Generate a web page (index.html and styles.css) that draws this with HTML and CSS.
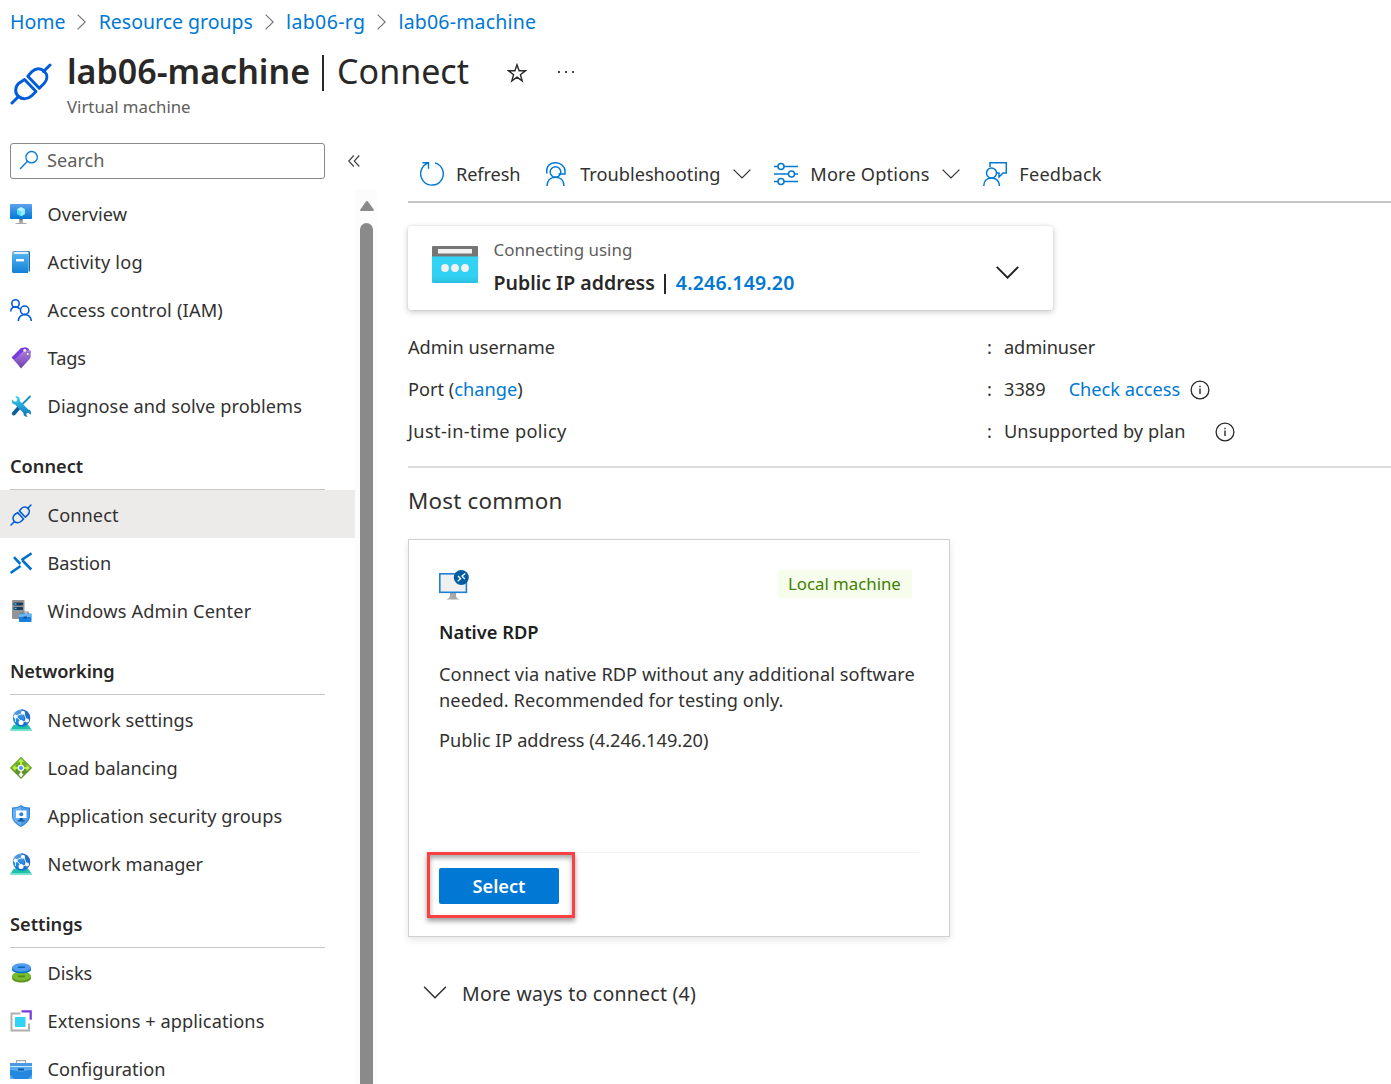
FILE: index.html
```html
<!DOCTYPE html>
<html lang="en">
<head>
<meta charset="utf-8">
<title>lab06-machine | Connect</title>
<link rel="stylesheet" href="styles.css">
</head>
<body>
<svg class="defs" aria-hidden="true">
  <defs>
    <linearGradient id="blue" x1="0" y1="0" x2="0" y2="1"><stop offset="0" stop-color="#5ea0ef"/><stop offset="1" stop-color="#0078d4"/></linearGradient>
    <linearGradient id="sky" x1="0" y1="0" x2="0" y2="1"><stop offset="0" stop-color="#54b5ef"/><stop offset="1" stop-color="#1380d8"/></linearGradient>
    <linearGradient id="purple" x1="0" y1="0" x2="0" y2="1"><stop offset="0" stop-color="#b27fe0"/><stop offset="1" stop-color="#6a3fb0"/></linearGradient>
    <linearGradient id="grey" x1="0" y1="0" x2="0" y2="1"><stop offset="0" stop-color="#707070"/><stop offset="1" stop-color="#c4c4c4"/></linearGradient>
    <linearGradient id="tool" x1="0" y1="0" x2="0" y2="1"><stop offset="0" stop-color="#32d4f5"/><stop offset="1" stop-color="#1270b8"/></linearGradient>
    <linearGradient id="cyan" x1="0" y1="0" x2="0" y2="1"><stop offset="0" stop-color="#32d4f5"/><stop offset=".75" stop-color="#32d0f2"/><stop offset="1" stop-color="#2abfe0"/></linearGradient>
    <symbol id="plug" viewBox="0 0 42 42">
      <g fill="none" stroke="#015cda" stroke-width="3" stroke-linecap="round" stroke-linejoin="round">
        <path d="M2 40l6.500-6.500M33.500 8.500L40 2"/>
        <path d="M14.500 16.500l11.500 12-4 4c-4 4-10 4-13.500 1s-4-9 0-13z"/>
        <path d="M17.800 13.200l11.500 12 4.500-4.500c4-4 4-9 .5-12.500s-8.500-3.500-12.500.5z"/>
      </g>
    </symbol>
    <symbol id="vm" viewBox="0 0 22 22">
      <path d="M7.500 20.500c2-.6 1.800-2 1.800-4.500h3.400c0 2.500-.2 3.900 1.800 4.500z" fill="url(#grey)"/><path d="M5.500 20h11v1h-11z" fill="#a9a9a9"/>
      <rect y="1" width="22" height="15" rx=".8" fill="url(#blue)"/>
      <path d="M11 4l4 2.300v4.600l-4 2.300-4-2.300V6.300z" fill="#50e0ff"/><path d="M11 4l4 2.300-4 2.300-4-2.300z" fill="#b5f3ff"/><path d="M11 8.600l4-2.300v4.600l-4 2.300z" fill="#9cebff"/>
    </symbol>
    <symbol id="book" viewBox="0 0 22 22">
      <path d="M4 0h14.500a1.500 1.500 0 0 1 1.500 1.500v19h-16z" fill="#1269ae"/><path d="M4 1h14.500v20H4z" fill="#e6f1fa"/>
      <path d="M2 2a2 2 0 0 0 1.500 1H18v19H3.500A1.500 1.500 0 0 1 2 20.500z" fill="url(#sky)"/><path d="M2 2a2 2 0 0 1 2-2h14v1H4.500a1 1 0 0 0 0 2H3z" fill="#5aa0d8"/>
      <rect x="6" y="8" width="8" height="2.400" fill="#fff"/>
    </symbol>
    <symbol id="people" viewBox="0 0 22 22">
      <g fill="none" stroke="#015cda" stroke-width="1.600"><circle cx="5.500" cy="4.500" r="3.700"/><circle cx="14.700" cy="11.200" r="4.200"/><path d="M.8 12.500c0-5 6-6 9-2.500M8.300 22c.5-8.500 12.400-8.500 13 0"/></g>
    </symbol>
    <symbol id="tag" viewBox="0 0 22 22">
      <path d="M1.500 10.500L11 1l5-.8 3 1.800-2 9-9 6z" fill="#773adc"/>
      <path d="M4 13L13.500 4l6-.8a1.300 1.300 0 0 1 1.400 1.300l-.4 6.500-9.500 10.500z" fill="url(#purple)"/>
      <circle cx="14.800" cy="3.200" r="1.500" fill="#eee"/><circle cx="17.700" cy="7" r="1.600" fill="#fff" stroke="#6a3fb0" stroke-width=".7"/>
    </symbol>
    <symbol id="tools" viewBox="0 0 22 22">
      <path d="M20.500 1L9.500 12" stroke="#188fc0" stroke-width="1.800"/><path d="M9.500 12L3.800 18.500" stroke="#125f98" stroke-width="4" stroke-linecap="round"/>
      <path d="M2 4.500l2.500 2.300 2.300-.6.500-2.300L5.200 1.500C8 .7 10.300 3 9.800 6l8.500 8.600c2.300.2 3.500 3 2.200 5.200l-2-2-1.800.5-.5 1.800 1.500 1.500c-2.500.6-4.500-1.300-4.300-3.700L5 9.500C2.500 9.500 1.200 7 2 4.500z" fill="url(#tool)"/>
    </symbol>
    <symbol id="bastion" viewBox="0 0 22 22">
      <g fill="none" stroke="#0072c9" stroke-width="2.600"><path d="M4 5.200l6.300 6.800M.6 20.800l10-6.800"/><path d="M21.600 1.300l-10.200 6.900M12.500 8.500l8.800 9"/></g>
    </symbol>
    <symbol id="server" viewBox="0 0 22 22">
      <rect x="2" width="12.500" height="19" rx="1" fill="#949494"/><rect x="3.500" y="2.500" width="9.500" height="3" rx="1" fill="#173a5b"/><rect x="3.500" y="7" width="9.500" height="3" rx="1" fill="#173a5b"/>
      <path d="M4.500 4h2m-2 4.500h2" stroke="#43c7f4" stroke-width="1.500"/>
      <path d="M12.500 14v-2h5.500v2" fill="none" stroke="#888" stroke-width="1.200"/><rect x="9" y="13.500" width="12.500" height="8.500" rx=".8" fill="#1a7fd8"/><path d="M9 14h12.500v3H9z" fill="#66b4f4"/><path d="M13.500 16.500h3.500v2h-3.500z" fill="#0b559d"/>
    </symbol>
    <symbol id="globe" viewBox="0 0 22 22">
      <path d="M3.500 16h15l3.500 5.500H0z" fill="#1fc4a6"/><path d="M1 20h20l1 1.500H0z" fill="#6fe1cc"/>
      <circle cx="11.500" cy="9" r="8.700" fill="url(#blue)"/><path d="M11.500.3a8.700 8.700 0 0 1 0 17.400 12 12 0 0 0 3-9z" fill="#2470c8"/>
      <g stroke="#d9efff" stroke-width="1"><path d="M5.500 7L14 4M5.500 7l6.500 6M14 4l2.500 7.500-4.500 2M5.500 7v6" fill="none"/></g>
      <g fill="#fff"><circle cx="13" cy="3.800" r="2"/><circle cx="5.500" cy="7.500" r="2"/><circle cx="11" cy="13.500" r="2.500"/><circle cx="17" cy="11.500" r="2"/></g>
    </symbol>
    <symbol id="balance" viewBox="0 0 22 22">
      <path d="M11 0l11 11-11 11L0 11z" fill="#5e9624"/><path d="M11 0l11 11H0z" fill="#72ad2c"/>
      <g fill="#b6ef48"><path d="M11 1.500L7.800 5H10v4h2V5h2.200zM2 11l3.500-3.200V10H9v2H5.500v2.200zM20 11l-3.500-3.200V10H13v2h3.500v2.200z"/></g>
      <path d="M11 14v3" stroke="#fff" stroke-width="1.200"/><circle cx="11" cy="11" r="3.200" fill="#fff"/><circle cx="11" cy="11" r="2" fill="#4b94e8"/><path d="M8.500 17.200h5L11 20.500z" fill="#fff"/><circle cx="11" cy="17.200" r="1.700" fill="#fff"/>
    </symbol>
    <symbol id="shield" viewBox="0 0 22 22">
      <path d="M11 0c2.500 2 5.500 2.300 9 2.500V11c0 5-4.500 8.500-9 11C6.500 19.500 2 16 2 11V2.500C5.500 2.300 8.500 2 11 0z" fill="#2e83dc"/><path d="M11 1.300c2.500 1.800 5 2.200 8 2.400V11c0 4.500-4 7.500-8 9.700z" fill="#4f9ceb"/><path d="M11 1.300C8.500 3.100 6 3.500 3 3.700V11c0 4.500 4 7.500 8 9.700z" fill="#68b2f5"/>
      <rect x="6" y="5.500" width="10.500" height="7.500" fill="#fff"/><path d="M10 13h2.300l.7 2.500H9.200z" fill="#134f90"/><path d="M7.500 15.300h7.200v1.200H7.500z" fill="#144f90"/><circle cx="11.300" cy="9.200" r="2" fill="#2e83dc"/>
    </symbol>
    <symbol id="disks" viewBox="0 0 22 22">
      <path d="M2 14v2c0 6 19 6 19 0v-2z" fill="#5e9624"/><ellipse cx="11.500" cy="14" rx="9.500" ry="4.500" fill="#76bc2d"/><path d="M8 13.500h7v1.700H8z" fill="#55861f"/>
      <path d="M2 5.500v2c0 5 19 5 19 0v-2z" fill="#0072cc"/><ellipse cx="11.500" cy="5.500" rx="9.500" ry="4.300" fill="#519ceb"/><path d="M8 4.500h7v1.500H8z" fill="#0769bd"/>
    </symbol>
    <symbol id="ext" viewBox="0 0 22 22">
      <path d="M10.500 3.500H1.500v17h17.500v-7" fill="none" stroke="#b0b0b0" stroke-width="2"/><path d="M11.500 1.300h9.200v8.500" fill="none" stroke="#773adc" stroke-width="2.200"/><rect x="5" y="7" width="10.500" height="10" fill="#32d4f5"/>
    </symbol>
    <symbol id="case" viewBox="0 0 22 22">
      <path d="M6.500 6V2.600h9V6" fill="none" stroke="#aaa" stroke-width="1.200"/><rect y="5" width="22" height="16" rx=".8" fill="#2288e0"/><path d="M0 5.800a.8.800 0 0 1 .8-.8h20.400a.8.800 0 0 1 .8.800V8H0z" fill="#4b99e6"/><path d="M0 8h22v1.300H0z" fill="#b9efff"/><path d="M0 9.300h22V12c-5 0-7 1.500-11 1.500S5 12 0 12z" fill="#5ca8ee"/><path d="M8 10.500h6v2H8z" fill="#0b5ba8"/><path d="M0 21v-4l4 4zM22 21v-4l-4 4z" fill="#63aef2"/>
    </symbol>
    <symbol id="info" viewBox="0 0 20 20"><circle cx="10" cy="10" r="8.900" fill="none" stroke="#292827" stroke-width="1.300"/><path d="M10 8.500v5.500M10 5.700v1.500" stroke="#292827" stroke-width="1.400"/></symbol>
    <symbol id="sep" viewBox="0 0 9 16"><path d="M.6.600L8.200 8 .6 15.400" fill="none" stroke="#777" stroke-width="1.200"/></symbol>
    <symbol id="down" viewBox="0 0 18 10"><path d="M.6.600L9 9 17.400.6" fill="none" stroke="currentColor" stroke-width="var(--w,1.200)"/></symbol>
  </defs>
</svg>

<nav class="crumbs">
  <a>Home</a><svg><use href="#sep"/></svg><a>Resource groups</a><svg><use href="#sep"/></svg><a class="wider">lab06-rg</a><svg><use href="#sep"/></svg><a class="wide">lab06-machine</a>
</nav>

<header class="head">
  <svg class="head-icon"><use href="#plug"/></svg>
  <div class="titles">
    <div class="title-row">
      <h1><b>lab06-machine</b><i></i><span>Connect</span></h1>
      <svg class="star" viewBox="0 0 20 20"><path d="M10 1.800l2.100 6h6.300l-5 3.900 1.800 6.200-5.200-3.700-5.200 3.700 1.800-6.200-5-3.900h6.300z" fill="none" stroke="#292827" stroke-width="1.400"/></svg>
      <svg class="dots" viewBox="0 0 18 4"><path d="M1 1h2v2H1zM8 1h2v2H8zM15 1h2v2h-2z" fill="#444"/></svg>
    </div>
    <p class="sub">Virtual machine</p>
  </div>
</header>

<div class="body">
  <aside class="side">
    <div class="search-row">
      <div class="search"><svg viewBox="0 0 20 20"><g fill="none" stroke="#0078d4" stroke-width="1.300"><circle cx="12.600" cy="7.200" r="5.700"/><path d="M8.500 11.300L1 19"/></g></svg><span>Search</span></div>
      <svg class="collapse" viewBox="0 0 12 12"><path d="M5.800.500L.8 6l5 5.500M11.300.500L6.300 6l5 5.500" fill="none" stroke="#444" stroke-width="1.200"/></svg>
    </div>
    <div class="menu-wrap">
      <ul class="menu">
        <li><svg><use href="#vm"/></svg><span>Overview</span></li>
        <li><svg><use href="#book"/></svg><span class="wide">Activity log</span></li>
        <li><svg><use href="#people"/></svg><span class="wide">Access control (IAM)</span></li>
        <li><svg><use href="#tag"/></svg><span class="tight">Tags</span></li>
        <li><svg><use href="#tools"/></svg><span class="loose">Diagnose and solve problems</span></li>
        <li class="group"><span>Connect</span></li>
        <li class="active"><svg><use href="#plug"/></svg><span class="loose">Connect</span></li>
        <li><svg><use href="#bastion"/></svg><span class="tight">Bastion</span></li>
        <li><svg><use href="#server"/></svg><span class="wide">Windows Admin Center</span></li>
        <li class="group"><span class="tight">Networking</span></li>
        <li><svg><use href="#globe"/></svg><span>Network settings</span></li>
        <li><svg><use href="#balance"/></svg><span>Load balancing</span></li>
        <li><svg><use href="#shield"/></svg><span class="loose">Application security groups</span></li>
        <li><svg><use href="#globe"/></svg><span>Network manager</span></li>
        <li class="group"><span>Settings</span></li>
        <li><svg><use href="#disks"/></svg><span class="tight">Disks</span></li>
        <li><svg><use href="#ext"/></svg><span class="loose">Extensions + applications</span></li>
        <li><svg><use href="#case"/></svg><span>Configuration</span></li>
      </ul>
      <div class="scroll"><svg viewBox="0 0 14 10"><path d="M6 .6a1.300 1.300 0 0 1 2 0l5.700 8c.4.700 0 1.400-.8 1.400H1.100C.3 10-.1 9.300.300 8.600z" fill="#8a8a8a"/></svg><div class="thumb"></div></div>
    </div>
  </aside>

  <main class="main">
    <div class="toolbar">
      <div class="cmd"><svg viewBox="1 1 24 24"><path d="M16 1.900a11.300 11.300 0 1 1-7 .3M3.500 1.700h6v6" fill="none" stroke="#0078d4" stroke-width="1.400"/></svg><span class="tight">Refresh</span></div>
      <div class="cmd"><svg viewBox="1 1 24 24"><g fill="none" stroke="#0078d4" stroke-width="1.500"><path d="M4 12.500C2.500 5.500 7 1.800 12.500 1.800S22 5.500 22 10v3h-6.500"/><circle cx="12.500" cy="11" r="5.300"/><path d="M4 25c0-5.500 3.500-8.700 8.500-8.700S21 19.500 21 25"/></g></svg><span>Troubleshooting</span><svg class="chev"><use href="#down"/></svg></div>
      <div class="cmd"><svg viewBox="1 1 24 24"><g fill="#fff" stroke="#0078d4" stroke-width="1.500"><path d="M1 5.500h24M1 13h24M1 20.500h24"/><circle cx="8" cy="5.500" r="3"/><circle cx="18.500" cy="13" r="3"/><circle cx="8" cy="20.500" r="3"/></g></svg><span class="wide">More Options</span><svg class="chev"><use href="#down"/></svg></div>
      <div class="cmd"><svg viewBox="1 1 24 24"><g fill="none" stroke="#0078d4" stroke-width="1.500"><path d="M8 6V1.800h16.300V12h-3.300l-4 4v-4h-2.500"/><circle cx="9.500" cy="12" r="5"/><path d="M1.800 25c0-5 3.200-8 7.700-8s8 3 8 8"/></g></svg><span class="wide">Feedback</span></div>
    </div>

    <section class="using">
      <svg class="ip-icon" viewBox="0 0 46 37"><path d="M0 10h46v26a1 1 0 0 1-1 1H1a1 1 0 0 1-1-1z" fill="url(#cyan)"/><path d="M0 10.500V1a1 1 0 0 1 1-1h44a1 1 0 0 1 1 1v9.500z" fill="#767676"/><rect x="6" y="3" width="34" height="4.500" fill="#f2f2f2"/><g fill="#f2f2f2"><circle cx="13" cy="22" r="3.900"/><circle cx="23" cy="22" r="3.900"/><circle cx="33" cy="22" r="3.900"/></g></svg>
      <div class="using-text">
        <div class="label">Connecting using</div>
        <div class="value"><span>Public IP address</span><i></i><a>4.246.149.20</a></div>
      </div>
      <svg class="using-chev"><use href="#down"/></svg>
    </section>

    <dl class="facts">
      <div><dt>Admin username</dt><dd><span class="colon">:</span><span class="tight">adminuser</span></dd></div>
      <div><dt>Port (<a>change</a>)</dt><dd><span class="colon">:</span><span>3389</span><a class="check">Check access</a><svg><use href="#info"/></svg></dd></div>
      <div><dt class="wider">Just-in-time policy</dt><dd><span class="colon">:</span><span class="loose">Unsupported by plan</span><svg class="far"><use href="#info"/></svg></dd></div>
    </dl>

    <h2>Most common</h2>

    <section class="card">
      <div class="card-top">
        <svg class="rdp" viewBox="0 0 30 30"><path d="M7 29.500c4-1 4-3 4-7h6c0 4 0 6 4 7z" fill="#a8a8a8"/><rect x=".8" y="3.800" width="26.600" height="18.500" fill="#f0f0f0" stroke="#1d80d8" stroke-width="1.600"/><circle cx="22.300" cy="7.500" r="7.500" fill="#005ba1"/><path d="M19 6l2.600 2.800-3 2.500M26.300 3.500l-3.300 2.600 2.900 2.900" fill="none" stroke="#fff" stroke-width="1.300"/></svg>
        <div class="badge">Local machine</div>
      </div>
      <h3>Native RDP</h3>
      <p class="desc loose">Connect via native RDP without any additional software<br>needed. Recommended for testing only.</p>
      <p class="addr">Public IP address (4.246.149.20)</p>
      <div class="card-foot"><div class="mark"></div><button>Select</button></div>
    </section>

    <div class="more"><svg><use href="#down"/></svg><span>More ways to connect (4)</span></div>
  </main>
</div>
</body>
</html>
```
FILE: styles.css
```css
* { box-sizing: border-box; }
body {
  margin: 0;
  width: 1391px;
  height: 1084px;
  overflow: hidden;
  position: relative;
  background: #fff;
  color: #323130;
  font: 18.2px/26px "Noto Sans", "Open Sans", sans-serif;
}
h1, h2, h3, p, ul, dl, dd { margin: 0; padding: 0; font-weight: 400; }
svg { display: block; flex: none; }
span, a, b, p, dt { white-space: nowrap; }
a { color: #0078d4; }
.defs { position: absolute; width: 0; height: 0; }
.tight { letter-spacing: -.1px; }
.loose { letter-spacing: .07px; }
.wide { letter-spacing: .18px; }
.wider { letter-spacing: .35px; }

.crumbs { display: flex; align-items: center; height: 43px; padding-left: 10px; font-size: 19.500px; }
.crumbs svg { width: 9px; height: 16px; margin: 1px 12.200px 0 12px; }

.head { display: flex; height: 100px; padding-left: 10px; }
.head-icon { width: 42px; height: 42px; margin-top: 20px; }
.titles { margin-left: 15px; }
.title-row { display: flex; align-items: center; height: 55px; padding-top: 1px; }
h1 { display: flex; align-items: center; font-size: 34px; line-height: 54px; color: #292827; }
h1 b { font-weight: 600; }
h1 i { width: 2px; height: 36px; margin: 3px 13px 0 12px; background: #292827; }
.star { width: 20px; height: 20px; margin-left: 38.500px; margin-top: 3px; }
.dots { width: 18px; height: 4px; margin: 2px 0 0 30px; }
.sub { font-size: 16.800px; line-height: 18px; color: #605e5c; }

.body { display: flex; height: 941px; }
.side { width: 373px; flex: none; }
.search-row { display: flex; height: 46px; padding-left: 10px; }
.search { display: flex; align-items: center; width: 315px; height: 36px; padding: 0 0 2px 8px; border: 1px solid #8a8886; border-radius: 3px; color: #605e5c; }
.search svg { width: 20px; height: 20px; margin-right: 8px; }
.collapse { width: 12px; height: 12px; margin: 12px 0 0 23px; }
.menu-wrap { display: flex; height: 895px; }
.menu { flex: none; list-style: none; width: 355px; overflow: hidden; }
.menu li { display: flex; align-items: center; height: 48px; padding: 2px 0 0 10px; }
.menu li svg { width: 22px; height: 22px; margin-right: 15.600px; }
.menu .group { height: 61px; width: 315px; margin-left: 10px; padding: 13px 0 0; border-bottom: 1px solid #c8c6c4; font-weight: 600; color: #292827; }
.menu .active { background: #edebe9; }
.scroll { flex: none; width: 22px; padding: 12px 0 0 4px; background: #fcfcfc; }
.scroll svg { width: 14px; height: 10px; margin-left: .5px; }
.thumb { width: 13px; height: 900px; margin: 12px 0 0 1px; border-radius: 7px; background: #8a8a8a; }

.main { flex: 1; padding-left: 35px; min-width: 0; }
.toolbar { display: flex; align-items: center; gap: 23.700px; height: 60px; padding: 3px 0 0 12px; border-bottom: 2px solid #c8c6c4; }
.cmd { display: flex; align-items: center; }
.cmd svg { width: 24px; height: 24px; margin-right: 12px; }
.cmd .chev { width: 18px; height: 10px; margin: 0 0 0 12px; }

.using { display: flex; width: 645px; height: 84px; margin-top: 23px; padding-left: 24px; border-radius: 3px; box-shadow: 0 2px 6px rgba(0,0,0,.22), 0 0 2px rgba(0,0,0,.12); }
.ip-icon { width: 46px; height: 37px; margin-top: 20px; }
.using-text { margin-left: 15.500px; padding-top: 11px; }
.label { font-size: 16.900px; color: #605e5c; }
.value { display: flex; align-items: center; margin-top: 7px; font-size: 19.500px; font-weight: 600; color: #292827; }
.value a { letter-spacing: .18px; }
.value i { width: 2px; height: 20px; margin: 2px 10px 0 9px; background: #292827; }
.using-chev { --w: 1.500; width: 23px; height: 13px; margin: 40px 34px 0 auto; color: #201f1e; }

.facts { padding-top: 16px; height: 158px; border-bottom: 2px solid #dddbd9; }
.facts > div { display: flex; height: 42px; align-items: center; }
dt { width: 579px; }
dd { display: flex; align-items: center; }
.colon { width: 17px; }
.facts svg { width: 20px; height: 20px; margin: 2px 0 0 10px; }
.check { margin-left: 23px; }
.facts .far { margin-left: 29px; }

h2 { height: 71px; padding-top: 20px; font-size: 22.400px; letter-spacing: .22px; }

.card { width: 542px; height: 398px; padding: 30px; border: 1px solid #d2d0ce; box-shadow: 0 3px 7px rgba(0,0,0,.1); }
.card-top { display: flex; justify-content: space-between; padding-right: 7px; }
.rdp { width: 30px; height: 30px; }
.badge { width: 134px; height: 28px; padding-left: 10px; background: #f6fdec; color: #428000; font-size: 16.800px; line-height: 28px; }
h3 { margin-top: 19px; font-size: 18.300px; font-weight: 600; color: #201f1e; }
.desc { margin-top: 16px; }
.addr { margin-top: 14px; }
.card-foot { position: relative; height: 52px; margin-top: 99px; padding-top: 15px; border-top: 1px solid #f3f2f1; }
button { display: block; width: 120px; height: 36px; padding: 0; border: 0; border-radius: 2px; background: #0078d4; color: #fff; font: 600 18.200px/36px "Noto Sans", sans-serif; }
.mark { position: absolute; left: -12px; top: -1px; width: 148px; height: 66px; border: 3px solid #f94144; box-shadow: 0 3px 5px rgba(0,0,0,.4), inset 0 3px 5px rgba(0,0,0,.35); }

.more { display: flex; align-items: center; margin-top: 44px; padding-left: 15px; font-size: 19.500px; letter-spacing: .24px; }
.more svg { width: 24px; height: 13px; margin: -3px 15px 0 0; }
```
